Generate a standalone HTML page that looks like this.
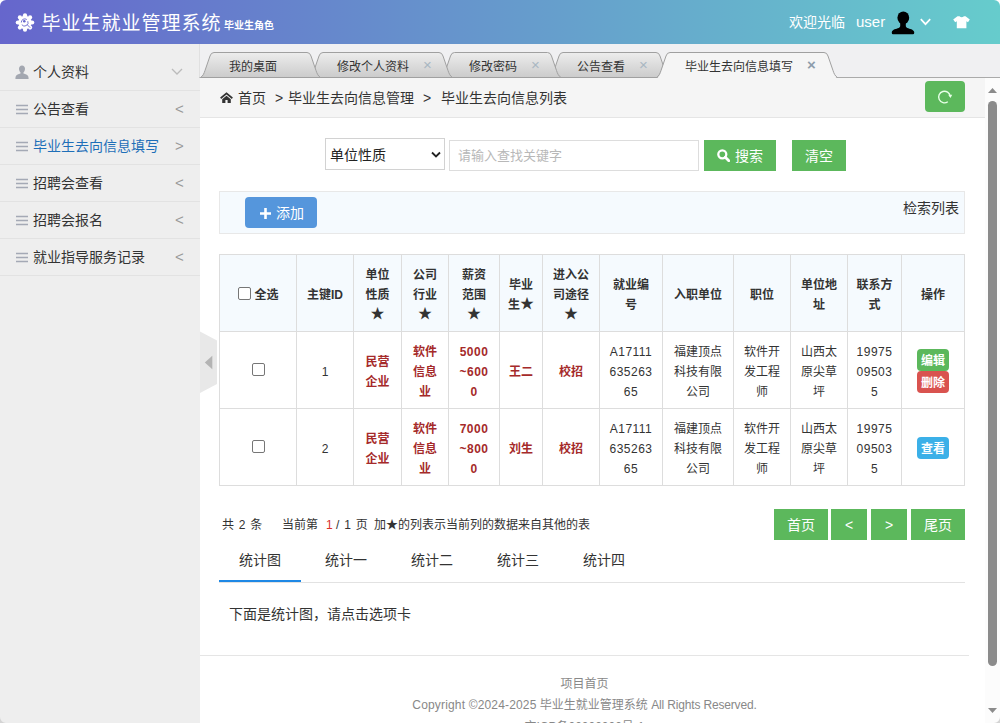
<!DOCTYPE html>
<html lang="zh-CN">
<head>
<meta charset="utf-8">
<title>毕业生就业管理系统</title>
<style>
*{box-sizing:border-box;margin:0;padding:0}
html,body{width:1000px;height:723px;overflow:hidden;background:#fff}
body{font-family:"Liberation Sans","Noto Sans CJK SC",sans-serif;font-size:14px;color:#333;position:relative}
.abs{position:absolute}
#hdr{position:absolute;left:0;top:0;width:1000px;height:44px;background:linear-gradient(90deg,#6666cc 0%,#66cccc 100%);border-radius:6px 6px 0 0;color:#fff}
#hdr .title{position:absolute;left:41.500px;top:9px;font-size:19px;letter-spacing:1px;line-height:30px;white-space:nowrap}
#hdr .role{position:absolute;left:224px;top:19px;font-size:10px;line-height:14px;font-weight:bold;white-space:nowrap}
#hdr .welcome{position:absolute;left:789px;top:12px;font-size:14px;line-height:20px;white-space:nowrap}
#side{position:absolute;left:0;top:44px;width:200px;height:679px;background:#eee}
#side .it{position:absolute;left:0;width:200px;height:37px;border-bottom:1px solid #e2e2e2;line-height:37px;font-size:14px;color:#333;white-space:nowrap}
#side .it .tx{position:absolute;left:33px;top:0}
#side .it .ar{position:absolute;left:175px;top:-1px;color:#999;font-size:15px}
#side .it svg{position:absolute}
#tabbar{position:absolute;left:199px;top:44px;width:801px;height:34px;background:#f0f0f2;border-bottom:1px solid #aaa;border-left:1px solid #e0e0e0}
.tabtx{position:absolute;top:59px;font-size:12px;line-height:16px;color:#333;white-space:nowrap}
.tabx{position:absolute;top:57px;font-size:15px;line-height:16px;color:#a9b7c2}
#crumb{position:absolute;left:200px;top:78px;width:785px;height:40px;background:#f5f5f5;border-bottom:1px solid #e5e5e5;font-size:14px;line-height:40px;white-space:nowrap}
#crumb span{position:absolute;top:0}
.gbtn{position:absolute;background:#5cb85c;color:#fff;text-align:center;white-space:nowrap;padding-top:1px}
#sb{position:absolute;left:985px;top:78px;width:15px;height:645px;background:#fcfcfc}
#sb .th{position:absolute;left:3px;top:23px;width:9px;height:565px;background:#8b8b8b;border-radius:4.500px}
table{border-collapse:collapse;position:absolute;left:219px;top:254px;width:745px;table-layout:fixed;font-size:12px}
td,th{border:1px solid #ddd;text-align:center;vertical-align:middle;line-height:20px;padding:0;height:77px}
th{background:#f5fafe;font-weight:bold;color:#333;padding-top:3px}
td{padding-top:3px}
td.n{letter-spacing:.5px}
.st{font-size:14px;line-height:1px;position:relative;top:-1px}
td.r{color:#a52a2a;font-weight:bold}
.lbl{display:block;width:32px;height:22px;line-height:24px;overflow:hidden;border-radius:4px;color:#fff;font-size:12px;font-weight:bold;margin:0 auto;position:relative;top:-1px}
.pg{position:absolute;top:515px;word-spacing:1.500px;font-size:12px;line-height:20px;white-space:nowrap;color:#333}
</style>
</head>
<body>
<div id="hdr">
  <svg class="abs" style="left:15px;top:13px" width="20" height="20" viewBox="0 0 20 20"><g fill="#fff"><circle cx="10" cy="9.500" r="6.800"/><circle cx="10.00" cy="2.30" r="2.1"/><circle cx="15.09" cy="4.41" r="2.1"/><circle cx="17.20" cy="9.50" r="2.1"/><circle cx="15.09" cy="14.59" r="2.1"/><circle cx="10.00" cy="16.70" r="2.1"/><circle cx="4.91" cy="14.59" r="2.1"/><circle cx="2.80" cy="9.50" r="2.1"/><circle cx="4.91" cy="4.41" r="2.1"/></g><path d="M6.300 9.500a3.500 3.500 0 0 1 5.500-3M12.800 8.200a3.500 3.500 0 0 1-6 3.500M12 11.500l3.200 3.200" fill="none" stroke="#6667cc" stroke-width="0.900"/><circle cx="9.300" cy="8.300" r="1.300" fill="#6667cc"/></svg>
  <div class="title">毕业生就业管理系统</div>
  <div class="role">毕业生角色</div>
  <div class="welcome">欢迎光临</div><div class="welcome" style="left:856px;font-size:15px">user</div>
  <svg class="abs" style="left:890px;top:10px" width="26" height="26" viewBox="0 0 26 26"><ellipse cx="13.300" cy="7.800" rx="5.900" ry="6.400" fill="#000"/><path d="M10.200 12v3.800c0 1.100-.5 1.800-1.500 2.200C6.200 19 2.600 19.300 1.800 22v1q0 1.200 1.200 1.200h20q1.200 0 1.200-1.200v-1c-.8-2.700-4.400-3-6.900-4-1-.4-1.500-1.100-1.500-2.200V12z" fill="#000"/></svg>
  <svg class="abs" style="left:919px;top:17px" width="13" height="10" viewBox="0 0 13 10"><path d="M1.800 2.200l4.700 5 4.700-5" fill="none" stroke="#fff" stroke-width="1.700"/></svg>
  <svg class="abs" style="left:952px;top:15px" width="19" height="14" viewBox="0 0 19 14"><path d="M1.200 4.500L5.500 1.200h2Q9.700 3.400 12 1.200h1.500l4.300 3.300-1.800 2.800-1.600-1V13.200H4.800V6.300l-1.600 1z" fill="#fff"/></svg>
</div>

<div id="side">
  <div class="it" style="top:10px">
    <svg style="left:15px;top:10.500px" width="14" height="15" viewBox="0 0 14 15"><path d="M7 .5c-1.800 0-3 1.400-3 3.300 0 1.500.6 2.900 1.500 3.600.2.200.2 1-.2 1.200-1.600.7-3.900 1.400-4.500 2.600-.3.700-.4 1.900-.4 2.800h13.200c0-.9-.1-2.100-.4-2.800-.6-1.200-2.900-1.900-4.500-2.600-.4-.2-.4-1-.2-1.200.9-.7 1.500-2.100 1.500-3.600 0-1.900-1.200-3.300-3-3.300z" fill="#a3a7b0"/></svg>
    <span class="tx">个人资料</span>
    <svg style="left:171px;top:14px" width="12" height="8" viewBox="0 0 12 8"><path d="M1 1l5 5 5-5" fill="none" stroke="#bbb" stroke-width="1.3"/></svg>
  </div>
  <div class="it" style="top:47px"><svg style="left:16px;top:13px" width="12" height="11" viewBox="0 0 12 11"><path d="M0 1.500h12M0 5.500h12M0 9.500h12" stroke="#a4a9b5" stroke-width="1.700"/></svg><span class="tx">公告查看</span><span class="ar">&lt;</span></div>
  <div class="it" style="top:84px"><svg style="left:16px;top:13px" width="12" height="11" viewBox="0 0 12 11"><path d="M0 1.500h12M0 5.500h12M0 9.500h12" stroke="#a4a9b5" stroke-width="1.700"/></svg><span class="tx" style="color:#1e6fb8">毕业生去向信息填写</span><span class="ar">&gt;</span></div>
  <div class="it" style="top:121px"><svg style="left:16px;top:13px" width="12" height="11" viewBox="0 0 12 11"><path d="M0 1.500h12M0 5.500h12M0 9.500h12" stroke="#a4a9b5" stroke-width="1.700"/></svg><span class="tx">招聘会查看</span><span class="ar">&lt;</span></div>
  <div class="it" style="top:158px"><svg style="left:16px;top:13px" width="12" height="11" viewBox="0 0 12 11"><path d="M0 1.500h12M0 5.500h12M0 9.500h12" stroke="#a4a9b5" stroke-width="1.700"/></svg><span class="tx">招聘会报名</span><span class="ar">&lt;</span></div>
  <div class="it" style="top:195px"><svg style="left:16px;top:13px" width="12" height="11" viewBox="0 0 12 11"><path d="M0 1.500h12M0 5.500h12M0 9.500h12" stroke="#a4a9b5" stroke-width="1.700"/></svg><span class="tx">就业指导服务记录</span><span class="ar">&lt;</span></div>
</div>

<div id="tabbar"></div>
<svg class="abs" style="left:200px;top:44px" width="800" height="35" viewBox="0 0 800 35">
  <defs><linearGradient id="tg" x1="0" y1="0" x2="0" y2="1"><stop offset="0" stop-color="#ededed"/><stop offset="1" stop-color="#cbcbcb"/></linearGradient></defs>
  <g stroke="#a0a0a0" stroke-width="1" fill="url(#tg)">
    <path d="M349.5 33.5C352.0 32.0 353.0 29.5 354.0 26.5L359.0 12Q360.0 8.5 363.0 8.5H456.0Q459.0 8.5 460.0 12L465.0 26.5C466.0 29.5 467.0 32.0 469.5 33.5z"/>
    <path d="M241 33.5C243.5 32.0 244.5 29.5 245.5 26.5L250.5 12Q251.5 8.5 254.5 8.5H347.5Q350.5 8.5 351.5 12L356.5 26.5C357.5 29.5 358.5 32.0 361 33.5z"/>
    <path d="M109.5 33.5C112.0 32.0 113.0 29.5 114.0 26.5L119.0 12Q120.0 8.5 123.0 8.5H239.0Q242.0 8.5 243.0 12L248.0 26.5C249.0 29.5 250.0 32.0 252.5 33.5z"/>
    <path d="M0.5 33.5C3.0 32.0 4.0 29.5 5.0 26.5L10.0 12Q11.0 8.5 14.0 8.5H107.0Q110.0 8.5 111.0 12L116.0 26.5C117.0 29.5 118.0 32.0 120.5 33.5z"/>
  </g>
  <path d="M456.5 34.5C459.0 33.0 460.0 30.5 461.0 27.5L466.0 12Q467.0 8.5 470.0 8.5H624.0Q627.0 8.5 628.0 12L633.0 27.5C634.0 30.5 635.0 33.0 637.5 34.5z" fill="#f5f5f5"/>
  <path d="M456.5 33.5C459.0 32.0 460.0 29.5 461.0 26.5L466.0 12Q467.0 8.5 470.0 8.5H624.0Q627.0 8.5 628.0 12L633.0 26.5C634.0 29.5 635.0 32.0 637.5 33.5" fill="none" stroke="#a0a0a0"/>
</svg>
<div class="tabtx" style="left:229px">我的桌面</div>
<div class="tabtx" style="left:337px">修改个人资料</div><div class="tabx" style="left:423px">×</div>
<div class="tabtx" style="left:469px">修改密码</div><div class="tabx" style="left:531px">×</div>
<div class="tabtx" style="left:577px">公告查看</div><div class="tabx" style="left:639px">×</div>
<div class="tabtx" style="left:685px">毕业生去向信息填写</div><div class="tabx" style="left:807px;color:#8d9dab;font-weight:bold">×</div>

<div id="crumb">
  <svg class="abs" style="left:19.500px;top:14.300px" width="13" height="11" viewBox="0 0 13 11"><path d="M6.500 0.200L0.100 5.600l1.100 1.300L6.500 2.500l5.300 4.400 1.100-1.300zM6.500 3.700L2.200 7.300V11h3.200V8h2.200v3h3.200V7.300z" fill="#333"/></svg>
  <span style="left:38px">首页</span>
  <span style="left:75px">&gt;</span><span style="left:88px">毕业生去向信息管理</span>
  <span style="left:223px">&gt;</span>
  <span style="left:241px">毕业生去向信息列表</span>
</div>
<div class="gbtn" style="left:925px;top:81px;width:40px;height:31px;border-radius:4px">
  <svg class="abs" style="left:12px;top:8px" width="16" height="16" viewBox="0 0 16 16"><path d="M13.200 7.300A5.800 5.800 0 1 0 10.800 12.750" fill="none" stroke="#e8ffe8" stroke-width="1.400"/><path d="M11.200 5.800h4l-1.700 3.200z" fill="#e8ffe8"/></svg>
</div>
<div id="sb"><div class="th"></div>
  <svg class="abs" style="left:3px;top:10px" width="9" height="5" viewBox="0 0 9 5"><path d="M0 5l4.500-5 4.500 5z" fill="#8b8b8b"/></svg>
  <svg class="abs" style="left:3px;top:630px" width="9" height="5" viewBox="0 0 9 5"><path d="M0 0l4.500 5 4.500-5z" fill="#8b8b8b"/></svg>
</div>

<!-- search row -->
<div class="abs" style="left:325px;top:138px;width:120px;height:32px;border:1px solid #d2d2d2;background:#fff;line-height:32px;padding-left:4px;font-size:14px;color:#222">单位性质
  <svg class="abs" style="left:105px;top:11.500px" width="10" height="8" viewBox="0 0 10 8"><path d="M1 1.500l4 4 4-4" fill="none" stroke="#222" stroke-width="1.800"/></svg>
</div>
<div class="abs" style="left:449px;top:140px;width:250px;height:31px;border:1px solid #ddd;background:#fff;line-height:29px;padding-left:8px;font-size:13px;color:#b8b8b8">请输入查找关键字</div>
<div class="gbtn" style="left:704px;top:140px;width:72px;height:31px;line-height:31px;font-size:14px;padding-left:18px">
  <svg class="abs" style="left:13px;top:9px" width="13" height="13" viewBox="0 0 13 13"><circle cx="5.300" cy="5.300" r="4" fill="none" stroke="#fff" stroke-width="2.300"/><path d="M8.300 8.300l3.500 3.500" stroke="#fff" stroke-width="2.800" stroke-linecap="round"/></svg>搜索</div>
<div class="gbtn" style="left:792px;top:140px;width:54px;height:31px;line-height:31px;font-size:14px">清空</div>

<!-- toolbar -->
<div class="abs" style="left:219px;top:191px;width:746px;height:43px;background:#f5fafe;border:1px solid #e8e8e8"></div>
<div class="abs" style="left:245px;top:197px;width:72px;height:31px;background:#5596dc;border-radius:4px;color:#fff;font-size:14px;line-height:31px;padding-left:31px;padding-top:1px;white-space:nowrap">
  <svg class="abs" style="left:14.500px;top:10.500px" width="11" height="11" viewBox="0 0 11 11"><path d="M5.500 0v11M0 5.500h11" stroke="#fff" stroke-width="2.600"/></svg>添加</div>
<div class="abs" style="left:903px;top:198px;font-size:14px;line-height:20px;white-space:nowrap">检索列表</div>

<table>
<colgroup><col style="width:77px"><col style="width:57px"><col style="width:48px"><col style="width:47px"><col style="width:51px"><col style="width:43px"><col style="width:57px"><col style="width:63px"><col style="width:71px"><col style="width:57px"><col style="width:57px"><col style="width:54px"><col style="width:63px"></colgroup>
<tr>
<th><span style="display:inline-block;width:13px;height:13px;border:1px solid #767676;border-radius:2px;background:#fff;vertical-align:-2px;margin-right:4px;position:relative;left:1px;top:-1px"></span>全选</th>
<th>主键ID</th><th>单位<br>性质<br><span class="st">★</span></th><th>公司<br>行业<br><span class="st">★</span></th><th>薪资<br>范围<br><span class="st">★</span></th><th>毕业<br>生<span class="st">★</span></th><th>进入公<br>司途径<br><span class="st">★</span></th><th>就业编<br>号</th><th>入职单位</th><th>职位</th><th>单位地<br>址</th><th>联系方<br>式</th><th>操作</th>
</tr>
<tr>
<td><span style="display:inline-block;width:13px;height:13px;border:1px solid #767676;border-radius:2px;background:#fff;position:relative;top:0px"></span></td>
<td>1</td><td class="r">民营<br>企业</td><td class="r">软件<br>信息<br>业</td><td class="r n">5000<br>~600<br>0</td><td class="r">王二</td><td class="r">校招</td><td class="n">A17111<br>635263<br>65</td><td>福建顶点<br>科技有限<br>公司</td><td>软件开<br>发工程<br>师</td><td>山西太<br>原尖草<br>坪</td><td class="n">19975<br>09503<br>5</td>
<td><span class="lbl" style="background:#5cb85c">编辑</span><span class="lbl" style="background:#d9534f">删除</span></td>
</tr>
<tr>
<td><span style="display:inline-block;width:13px;height:13px;border:1px solid #767676;border-radius:2px;background:#fff;position:relative;top:0px"></span></td>
<td>2</td><td class="r">民营<br>企业</td><td class="r">软件<br>信息<br>业</td><td class="r n">7000<br>~800<br>0</td><td class="r">刘生</td><td class="r">校招</td><td class="n">A17111<br>635263<br>65</td><td>福建顶点<br>科技有限<br>公司</td><td>软件开<br>发工程<br>师</td><td>山西太<br>原尖草<br>坪</td><td class="n">19975<br>09503<br>5</td>
<td><span class="lbl" style="background:#3bb0e8">查看</span></td>
</tr>
</table>

<!-- collapse handle -->
<svg class="abs" style="left:200px;top:331px" width="18" height="63" viewBox="0 0 18 63"><path d="M0 0.500L17 9.500V53L0 62z" fill="#e8e8e8"/><path d="M12.300 24.800v13.400L4.800 31.500z" fill="#b4b4b4"/></svg>

<!-- pager -->
<div class="pg" style="left:222px">共 2 条</div>
<div class="pg" style="left:282px">当前第</div>
<div class="pg" style="left:326px;color:#d9302a">1</div>
<div class="pg" style="left:336px">/ 1 页</div>
<div class="pg" style="left:374px">加★的列表示当前列的数据来自其他的表</div>
<div class="gbtn" style="left:774px;top:509px;width:54px;height:31px;line-height:31px;font-size:14px">首页</div>
<div class="gbtn" style="left:831px;top:509px;width:36px;height:31px;line-height:31px;font-size:14px">&lt;</div>
<div class="gbtn" style="left:871px;top:509px;width:36px;height:31px;line-height:31px;font-size:14px">&gt;</div>
<div class="gbtn" style="left:911px;top:509px;width:54px;height:31px;line-height:31px;font-size:14px">尾页</div>

<!-- stat tabs -->
<div class="abs" style="left:219px;top:582px;width:746px;height:1px;background:#e2e2e2"></div>
<div class="abs" style="left:219px;top:580px;width:82px;height:2px;background:#1e88e5"></div>
<div class="abs" style="left:239px;top:550px;font-size:14px;line-height:20px;white-space:nowrap">统计图</div>
<div class="abs" style="left:325px;top:550px;font-size:14px;line-height:20px;white-space:nowrap">统计一</div>
<div class="abs" style="left:411px;top:550px;font-size:14px;line-height:20px;white-space:nowrap">统计二</div>
<div class="abs" style="left:497px;top:550px;font-size:14px;line-height:20px;white-space:nowrap">统计三</div>
<div class="abs" style="left:583px;top:550px;font-size:14px;line-height:20px;white-space:nowrap">统计四</div>
<div class="abs" style="left:229px;top:604px;font-size:14px;line-height:20px;white-space:nowrap">下面是统计图，请点击选项卡</div>

<!-- footer -->
<div class="abs" style="left:200px;top:655px;width:769px;height:1px;background:#e5e5e5"></div>
<div class="abs" style="left:200px;top:673.500px;width:769px;text-align:center;font-size:12px;line-height:20px;color:#888">项目首页</div>
<div class="abs" style="left:200px;top:695px;width:769px;text-align:center;font-size:12px;line-height:20px;color:#888"><span style="letter-spacing:.16px">Copyright ©2024-2025</span> 毕业生就业管理系统 <span style="letter-spacing:-.16px">All Rights Reserved.</span></div>
<div class="abs" style="left:200px;top:717px;width:769px;text-align:center;font-size:12px;line-height:20px;color:#888">京ICP备00000000号-1</div>
<svg class="abs" style="left:0;top:717px" width="6" height="6" viewBox="0 0 6 6"><path d="M0 0A6 6 0 0 0 6 6H0z" fill="#d4d4d4"/></svg>
<svg class="abs" style="left:994px;top:717px" width="6" height="6" viewBox="0 0 6 6"><path d="M6 0A6 6 0 0 1 0 6H6z" fill="#d4d4d4"/></svg>
</body>
</html>
